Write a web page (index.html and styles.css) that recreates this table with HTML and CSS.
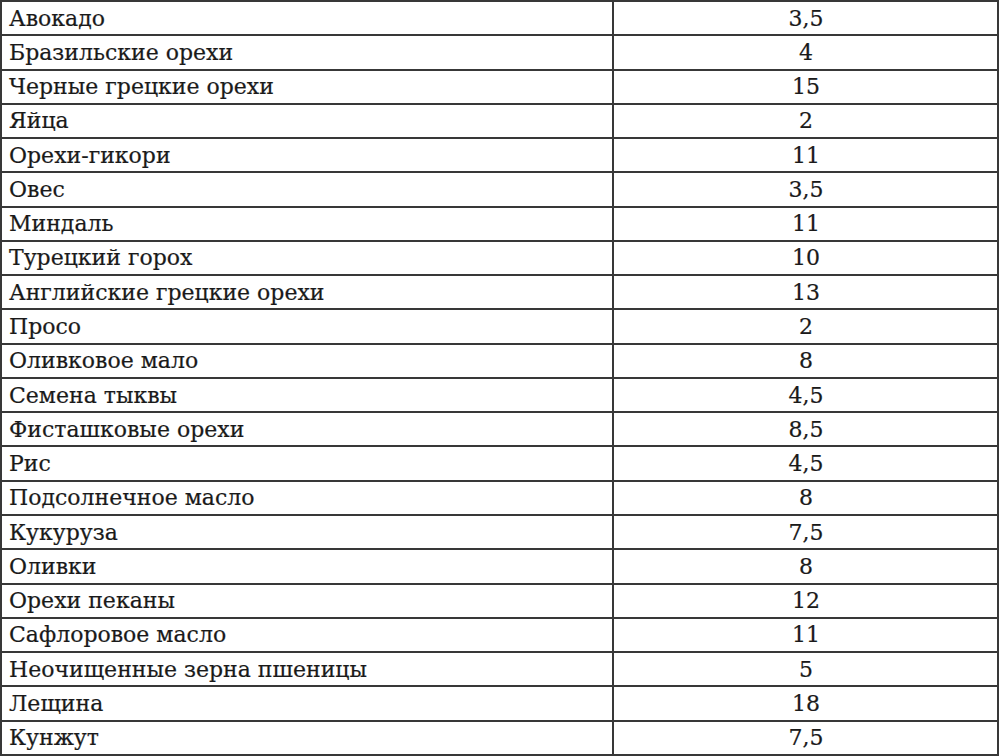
FILE: index.html
```html
<!DOCTYPE html>
<html lang="ru">
<head>
<meta charset="utf-8">
<link rel="stylesheet" href="styles.css">
</head>
<body>
<table class="grid">
<tbody>
<tr><td class="name">Авокадо</td><td class="val">3,5</td></tr>
<tr><td class="name">Бразильские орехи</td><td class="val">4</td></tr>
<tr><td class="name">Черные грецкие орехи</td><td class="val">15</td></tr>
<tr><td class="name">Яйца</td><td class="val">2</td></tr>
<tr><td class="name">Орехи-гикори</td><td class="val">11</td></tr>
<tr><td class="name">Овес</td><td class="val">3,5</td></tr>
<tr><td class="name">Миндаль</td><td class="val">11</td></tr>
<tr><td class="name">Турецкий горох</td><td class="val">10</td></tr>
<tr><td class="name">Английские грецкие орехи</td><td class="val">13</td></tr>
<tr><td class="name">Просо</td><td class="val">2</td></tr>
<tr><td class="name">Оливковое мало</td><td class="val">8</td></tr>
<tr><td class="name">Семена тыквы</td><td class="val">4,5</td></tr>
<tr><td class="name">Фисташковые орехи</td><td class="val">8,5</td></tr>
<tr><td class="name">Рис</td><td class="val">4,5</td></tr>
<tr><td class="name">Подсолнечное масло</td><td class="val">8</td></tr>
<tr><td class="name">Кукуруза</td><td class="val">7,5</td></tr>
<tr><td class="name">Оливки</td><td class="val">8</td></tr>
<tr><td class="name">Орехи пеканы</td><td class="val">12</td></tr>
<tr><td class="name">Сафлоровое масло</td><td class="val">11</td></tr>
<tr><td class="name">Неочищенные зерна пшеницы</td><td class="val">5</td></tr>
<tr><td class="name">Лещина</td><td class="val">18</td></tr>
<tr><td class="name">Кунжут</td><td class="val">7,5</td></tr>
</tbody>
</table>
</body>
</html>
```
FILE: styles.css
```css
html, body {
  margin: 0;
  padding: 0;
  background: #ffffff;
}
.grid {
  box-sizing: border-box;
  width: 999px;
  height: 756px;
  border-collapse: separate;
  border-spacing: 0;
  border-top: 2px solid #383838;
  border-left: 2px solid #383838;
  table-layout: fixed;
  font-family: "DejaVu Serif", "Liberation Serif", serif;
  font-size: 22px;
  color: #1a1a1a;
  -webkit-text-stroke: 0.2px #1a1a1a;
}
.grid tr {
  height: 34.27px;
}
.grid td {
  border-right: 2px solid #383838;
  border-bottom: 2px solid #383838;
  padding: 1px 6px 0 7px;
  line-height: 1;
  vertical-align: middle;
  white-space: nowrap;
}
.name {
  box-sizing: border-box;
  width: 612px;
  text-align: left;
}
.val {
  text-align: center;
}
```
